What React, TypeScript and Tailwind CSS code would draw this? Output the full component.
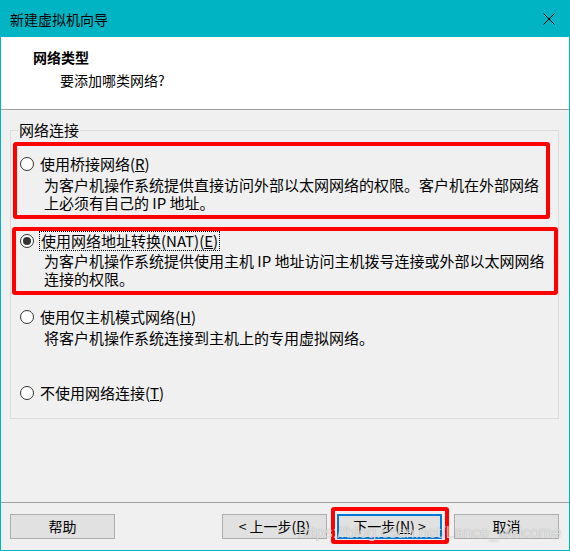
import React from "react";

const font = "font-['Noto_Sans_CJK_SC','Noto_Sans',sans-serif]";

function Radio({ checked }: { checked?: boolean }) {
  return (
    <span className="w-[14px] h-[14px] rounded-full border border-[#333333] bg-white flex items-center justify-center shrink-0">
      {checked && <span className="w-[8px] h-[8px] rounded-full bg-[#333333]" />}
    </span>
  );
}

function Btn({ children, primary }: { children: React.ReactNode; primary?: boolean }) {
  return (
    <div
      className={
        "w-[105px] h-[25px] flex items-center justify-center text-[14px] bg-[#e1e1e1] " +
        (primary ? "border-2 border-[#0078d7]" : "border border-[#adadad]")
      }
    >
      {children}
    </div>
  );
}

export default function App() {
  return (
    <div className={"relative w-[570px] h-[551px] bg-[#00b4c4] flex flex-col text-black " + font}>
      {/* title bar */}
      <div className="h-[37px] flex items-center justify-between pl-[10px] pr-[15px] shrink-0">
        <span className="text-[14px] leading-none text-black">新建虚拟机向导</span>
        <svg width="12" height="12" viewBox="0 0 12 12" className="mt-[1px]">
          <path d="M0.5 0.5 L11.5 11.5 M11.5 0.5 L0.5 11.5" stroke="#000" strokeWidth="1" />
        </svg>
      </div>
      <div className="flex-1 mx-[1px] mb-[1px] flex flex-col bg-[#f0f0f0]">
        {/* header */}
        <div className="h-[73px] bg-white border-b border-[#a0a0a0] shrink-0 pt-[10px]">
          <div className="pl-[32px] text-[14px] leading-[20px] font-bold">网络类型</div>
          <div className="pl-[59px] mt-[3px] text-[14px] leading-[20px]">要添加哪类网络?</div>
        </div>
        {/* body */}
        <fieldset className="mt-[12px] ml-[9px] w-[549px] h-[297px] border border-[#dcdcdc] p-0 m-0 shrink-0">
          <legend className="ml-[7px] px-[1px] text-[15px] leading-[16px]">网络连接</legend>
          <div className="pl-[9px] pt-[17px] text-[15px] leading-[18px]">
            {/* option 1 */}
            <div className="flex items-center gap-[6px] h-[18px]">
              <Radio />
              <span>
                使用桥接网络(<span className="underline">R</span>)
              </span>
            </div>
            <div className="pl-[24px] mt-[3px] whitespace-nowrap">
              <div>为客户机操作系统提供直接访问外部以太网网络的权限。客户机在外部网络</div>
              <div>上必须有自己的 IP 地址。</div>
            </div>
            {/* option 2 */}
            <div className="flex items-center gap-[5px] h-[18px] mt-[20px]">
              <Radio checked />
              <span className="border border-dotted border-black px-[1px]">
                使用网络地址转换(NAT)(<span className="underline">E</span>)
              </span>
            </div>
            <div className="pl-[24px] mt-[2px] whitespace-nowrap">
              <div>为客户机操作系统提供使用主机 IP 地址访问主机拨号连接或外部以太网网络</div>
              <div>连接的权限。</div>
            </div>
            {/* option 3 */}
            <div className="flex items-center gap-[6px] h-[18px] mt-[20px]">
              <Radio />
              <span>
                使用仅主机模式网络(<span className="underline">H</span>)
              </span>
            </div>
            <div className="pl-[24px] mt-[3px] whitespace-nowrap">
              <div>将客户机操作系统连接到主机上的专用虚拟网络。</div>
            </div>
            {/* option 4 */}
            <div className="flex items-center gap-[6px] h-[18px] mt-[37px]">
              <Radio />
              <span>
                不使用网络连接(<span className="underline">T</span>)
              </span>
            </div>
          </div>
        </fieldset>
        <div className="flex-1" />
        <div className="h-px bg-[#a0a0a0] shrink-0" />
        <div className="flex items-center pt-[11px] pb-[11px] pl-[9px] pr-[10px] shrink-0">
          <Btn>帮助</Btn>
          <div className="flex-1" />
          <Btn>
            &lt; 上一步(<span className="underline">B</span>)
          </Btn>
          <div className="w-[10px]" />
          <Btn primary>
            下一步(<span className="underline">N</span>) &gt;
          </Btn>
          <div className="w-[12px]" />
          <Btn>取消</Btn>
        </div>
      </div>

      {/* red annotation boxes */}
      <div className="absolute left-[13px] top-[142px] w-[537px] h-[77px] border-[4px] border-[#ff0000] rounded-[3px] pointer-events-none" />
      <div className="absolute left-[12px] top-[227px] w-[546px] h-[68px] border-[4px] border-[#ff0000] rounded-[3px] pointer-events-none" />
      <div className="absolute left-[331px] top-[507px] w-[118px] h-[37px] border-[4px] border-[#ff0000] rounded-[3px] pointer-events-none" />

      {/* watermark */}
      <div className="absolute left-[298px] top-[523px] text-[16px] leading-[20px] font-['Liberation_Sans',sans-serif] text-white/70 [text-shadow:0_0_1px_rgba(0,0,0,0.35)] pointer-events-none whitespace-nowrap">
        https://blog.csdn.net/Lance_welcome
      </div>
    </div>
  );
}
